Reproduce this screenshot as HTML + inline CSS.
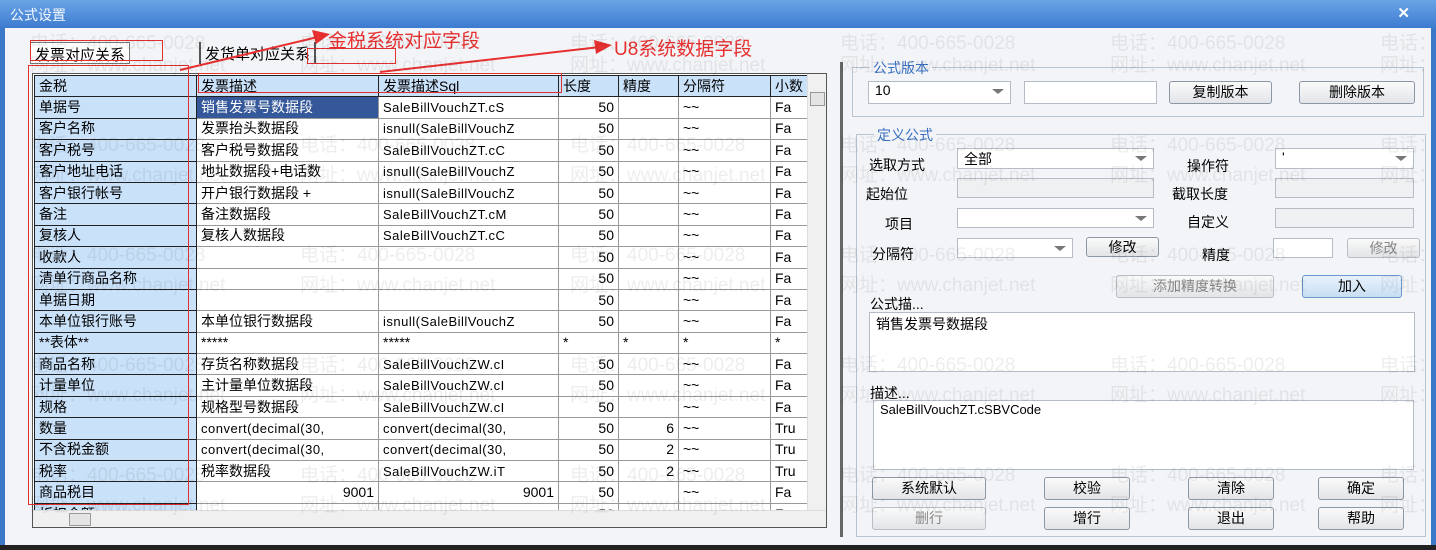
<!DOCTYPE html>
<html><head><meta charset="utf-8">
<style>
*{margin:0;padding:0;box-sizing:border-box}
body{width:1436px;height:550px;overflow:hidden;background:#3b78c8;font-family:"Liberation Sans","Noto Sans CJK SC",sans-serif;font-size:14px;color:#000;position:relative}
.title{position:absolute;left:0;top:0;width:1436px;height:28px;background:linear-gradient(#6aa4e6,#3d7bd0);color:#f4f8ff;font-size:14px;padding:5px 10px}
.close{position:absolute;right:26px;top:4px;color:#fff;font-size:15px;font-weight:bold}
.body{position:absolute;left:5px;top:28px;width:1426px;height:517px;background:#f2f4f7}
.bottom{position:absolute;left:0;top:545px;width:1436px;height:5px;background:#222}
.abs{position:absolute}
.tab{position:absolute;top:42px;height:22px;font-size:15px;padding:1px 4px}
.grid{position:absolute;left:32px;top:73px;width:795px;height:455px;border:1px solid #555;background:#fff;overflow:hidden}
table{border-collapse:collapse;table-layout:fixed;position:absolute;left:1px;top:1px}
td{height:21.4px;border:1px solid #999;white-space:nowrap;overflow:hidden;padding:0 4px;font-size:14px;line-height:19px}
td.c0{background:#c9e1f9;border-color:#222}
tr.h td{background:#c9e1f9;border-color:#222}
td.n{text-align:right}
td.sql{font-size:13px;letter-spacing:.5px}
td.sel{background:#34589a;color:#fff}
.vs{position:absolute;left:774px;top:0;width:20px;height:436px;background:#f0f0f0;border-left:1px solid #ddd}
.hs{position:absolute;left:0;top:436px;width:794px;height:18px;background:#f0f0f0;border-top:1px solid #ddd}
.box{position:absolute;border:1px solid #b8c4d2}
.lbl{position:absolute;color:#3a70c0;font-size:14px;background:#f2f4f7;padding:0 3px}
.in{position:absolute;background:#fff;border:1px solid #b5bcc6;font-size:14px;padding:0 6px}
.dis{background:#eef0f2}
.btn{position:absolute;height:23px;border:1px solid #8d98a6;border-radius:3px;background:linear-gradient(#fafafa,#e2e4e8);text-align:center;font-size:14px;line-height:21px}
.btn.d{color:#888;border-color:#b8bec6}
.arr{position:absolute;right:6px;top:7px;width:0;height:0;border-left:6px solid transparent;border-right:6px solid transparent;border-top:5px solid #777}
.t{position:absolute;font-size:14px}
.red{position:absolute;border:1px solid #e03030}
.rt{position:absolute;color:#e83030;font-size:19px}
.wm{position:absolute;font-size:19px;color:rgba(0,0,0,0.07);white-space:nowrap;pointer-events:none}
</style></head><body>
<div class="title">公式设置<span class="close">✕</span></div>
<div class="body"></div>
<div class="bottom"></div>

<div class="tab" style="left:30px;border:1px solid #777;background:#fff">发票对应关系</div>
<div class="tab" style="left:199px;border-left:2px solid #555;border-right:2px solid #555">发货单对应关系</div>

<div class="grid">
<table>
<colgroup><col style="width:162px"><col style="width:182px"><col style="width:180px"><col style="width:60px"><col style="width:60px"><col style="width:92px"><col style="width:40px"></colgroup>
<tr class="h"><td class="c0">金税</td><td>发票描述</td><td>发票描述Sql</td><td>长度</td><td>精度</td><td>分隔符</td><td>小数</td></tr>
<tr><td class="c0">单据号</td><td class="sel">销售发票号数据段</td><td class="sql">SaleBillVouchZT.cS</td><td class="n">50</td><td></td><td>~~</td><td>Fa</td></tr>
<tr><td class="c0">客户名称</td><td>发票抬头数据段</td><td class="sql">isnull(SaleBillVouchZ</td><td class="n">50</td><td></td><td>~~</td><td>Fa</td></tr>
<tr><td class="c0">客户税号</td><td>客户税号数据段</td><td class="sql">SaleBillVouchZT.cC</td><td class="n">50</td><td></td><td>~~</td><td>Fa</td></tr>
<tr><td class="c0">客户地址电话</td><td>地址数据段+电话数</td><td class="sql">isnull(SaleBillVouchZ</td><td class="n">50</td><td></td><td>~~</td><td>Fa</td></tr>
<tr><td class="c0">客户银行帐号</td><td>开户银行数据段 +</td><td class="sql">isnull(SaleBillVouchZ</td><td class="n">50</td><td></td><td>~~</td><td>Fa</td></tr>
<tr><td class="c0">备注</td><td>备注数据段</td><td class="sql">SaleBillVouchZT.cM</td><td class="n">50</td><td></td><td>~~</td><td>Fa</td></tr>
<tr><td class="c0">复核人</td><td>复核人数据段</td><td class="sql">SaleBillVouchZT.cC</td><td class="n">50</td><td></td><td>~~</td><td>Fa</td></tr>
<tr><td class="c0">收款人</td><td></td><td></td><td class="n">50</td><td></td><td>~~</td><td>Fa</td></tr>
<tr><td class="c0">清单行商品名称</td><td></td><td></td><td class="n">50</td><td></td><td>~~</td><td>Fa</td></tr>
<tr><td class="c0">单据日期</td><td></td><td></td><td class="n">50</td><td></td><td>~~</td><td>Fa</td></tr>
<tr><td class="c0">本单位银行账号</td><td>本单位银行数据段</td><td class="sql">isnull(SaleBillVouchZ</td><td class="n">50</td><td></td><td>~~</td><td>Fa</td></tr>
<tr><td class="c0">**表体**</td><td>*****</td><td>*****</td><td>*</td><td>*</td><td>*</td><td>*</td></tr>
<tr><td class="c0">商品名称</td><td>存货名称数据段</td><td class="sql">SaleBillVouchZW.cI</td><td class="n">50</td><td></td><td>~~</td><td>Fa</td></tr>
<tr><td class="c0">计量单位</td><td>主计量单位数据段</td><td class="sql">SaleBillVouchZW.cI</td><td class="n">50</td><td></td><td>~~</td><td>Fa</td></tr>
<tr><td class="c0">规格</td><td>规格型号数据段</td><td class="sql">SaleBillVouchZW.cI</td><td class="n">50</td><td></td><td>~~</td><td>Fa</td></tr>
<tr><td class="c0">数量</td><td class="sql">convert(decimal(30,</td><td class="sql">convert(decimal(30,</td><td class="n">50</td><td class="n">6</td><td>~~</td><td>Tru</td></tr>
<tr><td class="c0">不含税金额</td><td class="sql">convert(decimal(30,</td><td class="sql">convert(decimal(30,</td><td class="n">50</td><td class="n">2</td><td>~~</td><td>Tru</td></tr>
<tr><td class="c0">税率</td><td>税率数据段</td><td class="sql">SaleBillVouchZW.iT</td><td class="n">50</td><td class="n">2</td><td>~~</td><td>Tru</td></tr>
<tr><td class="c0">商品税目</td><td class="n">9001</td><td class="n">9001</td><td class="n">50</td><td></td><td>~~</td><td>Fa</td></tr>
<tr><td class="c0">折扣金额</td><td></td><td></td><td class="n">50</td><td></td><td>~~</td><td>Fa</td></tr>
</table>
<div class="vs"><div style="position:absolute;left:2px;top:18px;width:15px;height:14px;border:1px solid #999;background:#e4e4e4"></div></div>
<div class="hs"><div style="position:absolute;left:36px;top:2px;width:22px;height:13px;border:1px solid #999;background:#e4e4e4"></div></div>
</div>

<!-- red annotations -->
<div class="red" style="left:30px;top:40px;width:133px;height:21px"></div>
<div class="red" style="left:28px;top:65px;width:161px;height:440px"></div>
<div class="red" style="left:198px;top:73px;width:364px;height:20px"></div>
<div class="red" style="left:307px;top:48px;width:89px;height:16px"></div>
<div class="rt" style="left:328px;top:26px">金税系统对应字段</div>
<div class="rt" style="left:614px;top:34px">U8系统数据字段</div>
<svg class="abs" style="left:0;top:0" width="1436" height="550">
<line x1="180" y1="70" x2="322" y2="36" stroke="#e83030" stroke-width="2"/>
<polygon points="330,34 312,30 316,44" fill="#e83030"/>
<line x1="380" y1="72" x2="600" y2="47" stroke="#e83030" stroke-width="2"/>
<polygon points="612,45 594,40 596,54" fill="#e83030"/>
</svg>

<!-- right panel -->
<div class="abs" style="left:840px;top:62px;width:3px;height:475px;background:#666"></div>
<div class="box" style="left:852px;top:67px;width:572px;height:50px"></div>
<div class="lbl" style="left:870px;top:58px">公式版本</div>
<div class="in" style="left:868px;top:81px;width:143px;height:23px">10<span class="arr"></span></div>
<div class="in" style="left:1024px;top:81px;width:133px;height:23px"></div>
<div class="btn" style="left:1169px;top:81px;width:103px">复制版本</div>
<div class="btn" style="left:1299px;top:81px;width:116px">删除版本</div>

<div class="box" style="left:856px;top:134px;width:570px;height:403px"></div>
<div class="lbl" style="left:874px;top:125px">定义公式</div>
<div class="t" style="left:869px;top:155px">选取方式</div>
<div class="in" style="left:957px;top:148px;width:197px;height:21px">全部<span class="arr"></span></div>
<div class="t" style="left:1187px;top:156px">操作符</div>
<div class="in" style="left:1275px;top:148px;width:139px;height:21px">'<span class="arr"></span></div>
<div class="t" style="left:866px;top:184px">起始位</div>
<div class="in dis" style="left:957px;top:178px;width:197px;height:20px"></div>
<div class="t" style="left:1172px;top:184px">截取长度</div>
<div class="in dis" style="left:1275px;top:178px;width:139px;height:20px"></div>
<div class="t" style="left:885px;top:214px">项目</div>
<div class="in" style="left:957px;top:208px;width:197px;height:20px"><span class="arr"></span></div>
<div class="t" style="left:1187px;top:212px">自定义</div>
<div class="in dis" style="left:1275px;top:208px;width:139px;height:20px"></div>
<div class="t" style="left:872px;top:244px">分隔符</div>
<div class="in" style="left:957px;top:238px;width:116px;height:20px"><span class="arr"></span></div>
<div class="btn" style="left:1086px;top:237px;width:73px;height:20px;line-height:18px">修改</div>
<div class="t" style="left:1202px;top:245px">精度</div>
<div class="in" style="left:1273px;top:238px;width:60px;height:20px"></div>
<div class="btn d" style="left:1347px;top:238px;width:73px;height:20px;line-height:18px">修改</div>
<div class="btn d" style="left:1116px;top:275px;width:158px">添加精度转换</div>
<div class="btn" style="left:1302px;top:275px;width:100px;border-color:#6a98c8;background:linear-gradient(#e8f2fc,#c8def4)">加入</div>
<div class="t" style="left:870px;top:294px">公式描...</div>
<div class="in" style="left:869px;top:312px;width:546px;height:60px;padding-top:1px">销售发票号数据段</div>
<div class="t" style="left:870px;top:383px">描述...</div>
<div class="in" style="left:873px;top:400px;width:541px;height:70px;padding-top:1px;font-size:13px">SaleBillVouchZT.cSBVCode</div>
<div class="btn" style="left:872px;top:477px;width:114px">系统默认</div>
<div class="btn" style="left:1044px;top:477px;width:86px">校验</div>
<div class="btn" style="left:1188px;top:477px;width:86px">清除</div>
<div class="btn" style="left:1318px;top:477px;width:86px">确定</div>
<div class="btn d" style="left:872px;top:507px;width:114px">删行</div>
<div class="btn" style="left:1044px;top:507px;width:86px">增行</div>
<div class="btn" style="left:1188px;top:507px;width:86px">退出</div>
<div class="btn" style="left:1318px;top:507px;width:86px">帮助</div>

<!-- watermarks -->
<div class="wm" style="left:30px;top:28px">电话：400-665-0028</div>
<div class="wm" style="left:300px;top:28px">电话：400-665-0028</div>
<div class="wm" style="left:570px;top:28px">电话：400-665-0028</div>
<div class="wm" style="left:840px;top:28px">电话：400-665-0028</div>
<div class="wm" style="left:1110px;top:28px">电话：400-665-0028</div>
<div class="wm" style="left:1380px;top:28px">电话：400-665-0028</div>
<div class="wm" style="left:30px;top:50px">网址：www.chanjet.net</div>
<div class="wm" style="left:300px;top:50px">网址：www.chanjet.net</div>
<div class="wm" style="left:570px;top:50px">网址：www.chanjet.net</div>
<div class="wm" style="left:840px;top:50px">网址：www.chanjet.net</div>
<div class="wm" style="left:1110px;top:50px">网址：www.chanjet.net</div>
<div class="wm" style="left:1380px;top:50px">网址：www.chanjet.net</div>
<div class="wm" style="left:30px;top:130px">电话：400-665-0028</div>
<div class="wm" style="left:300px;top:130px">电话：400-665-0028</div>
<div class="wm" style="left:570px;top:130px">电话：400-665-0028</div>
<div class="wm" style="left:840px;top:130px">电话：400-665-0028</div>
<div class="wm" style="left:1110px;top:130px">电话：400-665-0028</div>
<div class="wm" style="left:1380px;top:130px">电话：400-665-0028</div>
<div class="wm" style="left:30px;top:160px">网址：www.chanjet.net</div>
<div class="wm" style="left:300px;top:160px">网址：www.chanjet.net</div>
<div class="wm" style="left:570px;top:160px">网址：www.chanjet.net</div>
<div class="wm" style="left:840px;top:160px">网址：www.chanjet.net</div>
<div class="wm" style="left:1110px;top:160px">网址：www.chanjet.net</div>
<div class="wm" style="left:1380px;top:160px">网址：www.chanjet.net</div>
<div class="wm" style="left:30px;top:240px">电话：400-665-0028</div>
<div class="wm" style="left:300px;top:240px">电话：400-665-0028</div>
<div class="wm" style="left:570px;top:240px">电话：400-665-0028</div>
<div class="wm" style="left:840px;top:240px">电话：400-665-0028</div>
<div class="wm" style="left:1110px;top:240px">电话：400-665-0028</div>
<div class="wm" style="left:1380px;top:240px">电话：400-665-0028</div>
<div class="wm" style="left:30px;top:270px">网址：www.chanjet.net</div>
<div class="wm" style="left:300px;top:270px">网址：www.chanjet.net</div>
<div class="wm" style="left:570px;top:270px">网址：www.chanjet.net</div>
<div class="wm" style="left:840px;top:270px">网址：www.chanjet.net</div>
<div class="wm" style="left:1110px;top:270px">网址：www.chanjet.net</div>
<div class="wm" style="left:1380px;top:270px">网址：www.chanjet.net</div>
<div class="wm" style="left:30px;top:350px">电话：400-665-0028</div>
<div class="wm" style="left:300px;top:350px">电话：400-665-0028</div>
<div class="wm" style="left:570px;top:350px">电话：400-665-0028</div>
<div class="wm" style="left:840px;top:350px">电话：400-665-0028</div>
<div class="wm" style="left:1110px;top:350px">电话：400-665-0028</div>
<div class="wm" style="left:1380px;top:350px">电话：400-665-0028</div>
<div class="wm" style="left:30px;top:380px">网址：www.chanjet.net</div>
<div class="wm" style="left:300px;top:380px">网址：www.chanjet.net</div>
<div class="wm" style="left:570px;top:380px">网址：www.chanjet.net</div>
<div class="wm" style="left:840px;top:380px">网址：www.chanjet.net</div>
<div class="wm" style="left:1110px;top:380px">网址：www.chanjet.net</div>
<div class="wm" style="left:1380px;top:380px">网址：www.chanjet.net</div>
<div class="wm" style="left:30px;top:460px">电话：400-665-0028</div>
<div class="wm" style="left:300px;top:460px">电话：400-665-0028</div>
<div class="wm" style="left:570px;top:460px">电话：400-665-0028</div>
<div class="wm" style="left:840px;top:460px">电话：400-665-0028</div>
<div class="wm" style="left:1110px;top:460px">电话：400-665-0028</div>
<div class="wm" style="left:1380px;top:460px">电话：400-665-0028</div>
<div class="wm" style="left:30px;top:490px">网址：www.chanjet.net</div>
<div class="wm" style="left:300px;top:490px">网址：www.chanjet.net</div>
<div class="wm" style="left:570px;top:490px">网址：www.chanjet.net</div>
<div class="wm" style="left:840px;top:490px">网址：www.chanjet.net</div>
<div class="wm" style="left:1110px;top:490px">网址：www.chanjet.net</div>
<div class="wm" style="left:1380px;top:490px">网址：www.chanjet.net</div>
</body></html>
